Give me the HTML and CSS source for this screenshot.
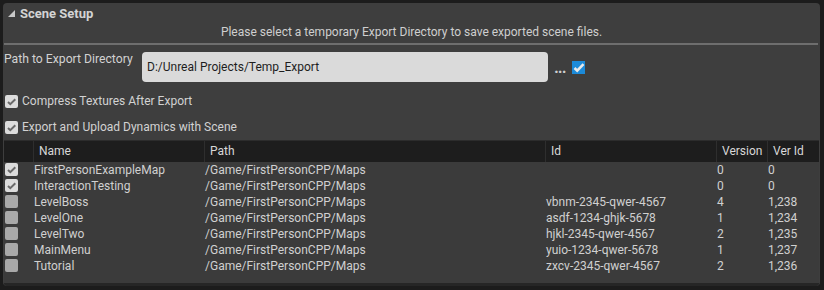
FILE: index.html
```html
<!DOCTYPE html>
<html lang="en">
<head>
    <meta charset="UTF-8">
    <title>Scene Setup</title>
    <link rel="stylesheet" href="styles.css">
</head>
<body>

<div class="panel">
    <div class="title">
        <svg class="arrow" width="7" height="7" viewBox="0 0 7 7"><polygon points="7,0 7,7 0,7" fill="#c8c8c8"/></svg>
        <span>Scene Setup</span>
    </div>
    <div class="note">Please select a temporary Export Directory to save exported scene files.</div>
    <div class="rule"></div>

    <div class="path-row">
        <div class="path-label">Path to Export Directory</div>
        <div class="path-box">D:/Unreal Projects/Temp_Export</div>
        <div class="dots">&middot;&middot;&middot;</div>
        <div class="check blue">
            <svg width="13" height="13" viewBox="0 0 13 13"><path d="M2.5 7 L5.2 9.6 L11.5 3.2" fill="none" stroke="#e8e8e8" stroke-width="2.6"/></svg>
        </div>
    </div>

    <div class="option">
        <div class="check on">
            <svg width="13" height="13" viewBox="0 0 13 13"><path d="M3 7 L5.3 9.2 L10.3 4.2" fill="none" stroke="#6a6a6a" stroke-width="2"/></svg>
        </div>
        <span>Compress Textures After Export</span>
    </div>
    <div class="option">
        <div class="check on">
            <svg width="13" height="13" viewBox="0 0 13 13"><path d="M3 7 L5.3 9.2 L10.3 4.2" fill="none" stroke="#6a6a6a" stroke-width="2"/></svg>
        </div>
        <span>Export and Upload Dynamics with Scene</span>
    </div>

    <div class="table">
        <div class="head">
            <div class="cell"></div>
            <div class="cell">Name</div>
            <div class="cell">Path</div>
            <div class="cell">Id</div>
            <div class="cell">Version</div>
            <div class="cell">Ver Id</div>
        </div>
        <div class="rows" id="rows"></div>
    </div>
</div>

<script>
    var levels = [
        ["FirstPersonExampleMap", "", "0", "0", true],
        ["InteractionTesting", "", "0", "0", true],
        ["LevelBoss", "vbnm-2345-qwer-4567", "4", "1,238", false],
        ["LevelOne", "asdf-1234-ghjk-5678", "1", "1,234", false],
        ["LevelTwo", "hjkl-2345-qwer-4567", "2", "1,235", false],
        ["MainMenu", "yuio-1234-qwer-5678", "1", "1,237", false],
        ["Tutorial", "zxcv-2345-qwer-4567", "2", "1,236", false]
    ];
    var tick = '<svg width="13" height="13" viewBox="0 0 13 13"><path d="M3 7 L5.3 9.2 L10.3 4.2" fill="none" stroke="#6a6a6a" stroke-width="2"/></svg>';
    var html = "";
    levels.forEach(function (l) {
        html += '<div class="row">' +
            '<div class="cell"><div class="check ' + (l[4] ? "on" : "") + '">' + (l[4] ? tick : "") + '</div></div>' +
            '<div class="cell">' + l[0] + '</div>' +
            '<div class="cell">/Game/FirstPersonCPP/Maps</div>' +
            '<div class="cell">' + l[1] + '</div>' +
            '<div class="cell">' + l[2] + '</div>' +
            '<div class="cell">' + l[3] + '</div>' +
            '</div>';
    });
    document.getElementById('rows').innerHTML = html;
</script>

</body>
</html>
```

FILE: styles.css
```css
body {
    margin: 0;
    background-color: #1c1c1c;
    font-family: Roboto, "Liberation Sans", sans-serif;
    font-size: 12px;
    color: #d2d2d2;
}
.panel {
    margin: 3px 4px 4px 3px;
    height: 283px;
    background-color: #3e3e3e;
    border-radius: 4px;
    display: flex;
    flex-direction: column;
}
.title {
    display: flex;
    align-items: center;
    height: 20px;
    padding-left: 5px;
    font-size: 13px;
    font-weight: bold;
    color: #d4d4d4;
}
.arrow {
    margin-right: 5px;
    margin-top: 1px;
}
.note {
    text-align: center;
    height: 17px;
    line-height: 17px;
    margin-top: 1px;
    color: #cfcfcf;
}
.rule {
    height: 2px;
    background-color: #6e6e6e;
    margin: 2px 2px 0 1px;
}
.path-row {
    display: flex;
    align-items: flex-start;
    margin-top: 7px;
}
.path-label {
    width: 138px;
    padding-left: 1px;
    font-size: 12.2px;
    line-height: 17px;
    margin-top: -1px;
}
.path-box {
    width: 401px;
    height: 30px;
    line-height: 31px;
    padding-left: 5px;
    background-color: #dadada;
    border-radius: 4px;
    color: #1e1e1e;
}
.dots {
    margin: 16px 0 0 6px;
    font-size: 16px;
    letter-spacing: -1px;
    line-height: 8px;
    font-weight: bold;
    color: #cfcfcf;
}
.path-row .check {
    margin: 9px 0 0 7px;
}
.check {
    width: 13px;
    height: 13px;
    border-radius: 2px;
    background-color: #a9a9a9;
    flex: none;
}
.check svg {
    display: block;
}
.check.on {
    background-color: #dcdcdc;
}
.check.blue {
    background-color: #1c8ad8;
    border-radius: 0;
}
.option {
    display: flex;
    align-items: center;
    gap: 4px;
    height: 26px;
    padding-left: 2px;
}
.path-row + .option {
    margin-top: 6px;
}
.table {
    margin: 0 1px 0 1px;
    flex: 1;
    background-color: #3b3b3b;
    border-bottom: 3px solid #262626;
    border-radius: 0 0 3px 3px;
}
.head, .row {
    display: grid;
    grid-template-columns: 29px 171px 341px 171px 51px 52px;
}
.head {
    height: 21px;
    background-color: #1d1d1d;
    border-top: 1px solid #2c2c2c;
}
.head .cell {
    line-height: 21px;
    padding-left: 5px;
    border-left: 1px solid #2e2e2e;
    color: #d8d8d8;
}
.head .cell:first-child {
    border-left: none;
}
.row {
    height: 16px;
    line-height: 16px;
}
.row .cell {
    padding-left: 1px;
    color: #d0d0d0;
}
.row .cell:first-child {
    padding-top: 1px;
}
```
